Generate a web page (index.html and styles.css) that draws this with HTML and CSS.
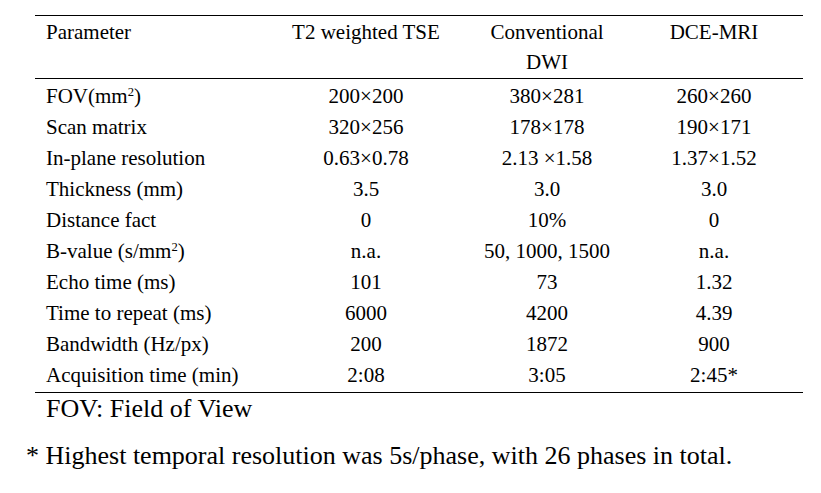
FILE: index.html
```html
<!DOCTYPE html>
<html>
<head>
<meta charset="utf-8">
<link rel="stylesheet" href="styles.css">
</head>
<body>
<section class="sheet">
  <table class="mri">
    <colgroup>
      <col class="k1"><col class="k2"><col class="k3"><col class="k4">
    </colgroup>
    <thead>
      <tr>
        <th class="lab">Parameter</th>
        <th>T2 weighted TSE</th>
        <th>Conventional<br>DWI</th>
        <th>DCE-MRI</th>
      </tr>
    </thead>
    <tbody>
      <tr><td class="lab">FOV(mm<sup>2</sup>)</td><td>200×200</td><td>380×281</td><td>260×260</td></tr>
      <tr><td class="lab">Scan matrix</td><td>320×256</td><td>178×178</td><td>190×171</td></tr>
      <tr><td class="lab">In-plane resolution</td><td>0.63×0.78</td><td>2.13 ×1.58</td><td>1.37×1.52</td></tr>
      <tr><td class="lab">Thickness (mm)</td><td>3.5</td><td>3.0</td><td>3.0</td></tr>
      <tr><td class="lab">Distance fact</td><td>0</td><td>10%</td><td>0</td></tr>
      <tr><td class="lab">B-value (s/mm<sup>2</sup>)</td><td>n.a.</td><td>50, 1000, 1500</td><td>n.a.</td></tr>
      <tr><td class="lab">Echo time (ms)</td><td>101</td><td>73</td><td>1.32</td></tr>
      <tr><td class="lab">Time to repeat (ms)</td><td>6000</td><td>4200</td><td>4.39</td></tr>
      <tr><td class="lab">Bandwidth (Hz/px)</td><td>200</td><td>1872</td><td>900</td></tr>
      <tr><td class="lab">Acquisition time (min)</td><td>2:08</td><td>3:05</td><td>2:45*</td></tr>
    </tbody>
  </table>
  <p class="fn-fov">FOV: Field of View</p>
  <p class="fn-star">* Highest temporal resolution was 5s/phase, with 26 phases in total.</p>
</section>
</body>
</html>
```

FILE: styles.css
```css
body {
  margin: 0;
  background: #ffffff;
  color: #000000;
  font-family: "Liberation Serif", serif;
}

html body .sheet,
html body .sheet * {
  font-family: "Liberation Serif", serif !important;
}

.sheet {
  padding: 15px 0 20px 35px;
}

.mri {
  width: 768px;
  border-collapse: collapse;
  table-layout: fixed;
  font-size: 21px;
  border-top: 1px solid #000;
  border-bottom: 1px solid #000;
}

.k1 { width: 228px; }
.k2 { width: 206px; }
.k3 { width: 156px; }
.k4 { width: 178px; }

.mri th,
.mri td {
  padding: 0;
  font-size: 21px;
  color: #000;
  text-align: center;
  font-weight: normal;
  white-space: nowrap;
}

.mri th {
  line-height: 30px;
  padding-top: 1px;
  padding-bottom: 1px;
  vertical-align: top;
  border-bottom: 1px solid #000;
}

.mri td {
  line-height: 31px;
}

.mri tbody tr:first-child td {
  padding-top: 2px;
}

.mri tbody tr:last-child td {
  padding-bottom: 1px;
}

.mri .lab {
  text-align: left;
  padding-left: 11px;
}

.mri sup {
  font-size: 0.6em;
  line-height: 0;
  vertical-align: 0.55em;
}

.fn-fov {
  margin: 0;
  padding-left: 11px;
  font-size: 26px;
  line-height: 32px;
  color: #000;
}

.fn-star {
  margin: 15px 0 0 -9px;
  font-size: 26px;
  line-height: 32px;
  color: #000;
}
```
